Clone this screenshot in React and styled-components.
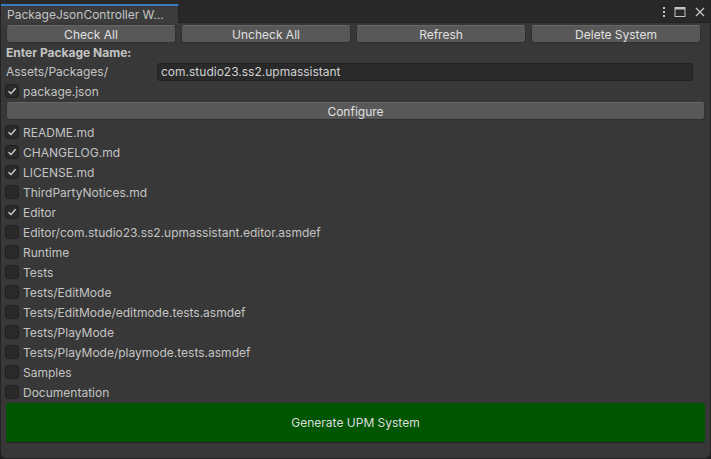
import styled, { createGlobalStyle } from 'styled-components';

const files = [
  { name: 'README.md', checked: true },
  { name: 'CHANGELOG.md', checked: true },
  { name: 'LICENSE.md', checked: true },
  { name: 'ThirdPartyNotices.md', checked: false },
  { name: 'Editor', checked: true },
  { name: 'Editor/com.studio23.ss2.upmassistant.editor.asmdef', checked: false },
  { name: 'Runtime', checked: false },
  { name: 'Tests', checked: false },
  { name: 'Tests/EditMode', checked: false },
  { name: 'Tests/EditMode/editmode.tests.asmdef', checked: false },
  { name: 'Tests/PlayMode', checked: false },
  { name: 'Tests/PlayMode/playmode.tests.asmdef', checked: false },
  { name: 'Samples', checked: false },
  { name: 'Documentation', checked: false }
];

const Check = ({ checked }) => (
  <Box>
    {checked && (
      <svg width="10" height="10" viewBox="0 0 10 10">
        <path d="M1.5 5.2 L4 7.6 L8.6 2.2" fill="none" stroke="#d2d2d2" strokeWidth="1.4" />
      </svg>
    )}
  </Box>
);

const App = () => {
  return (
    <>
      <GlobalStyle />
      <Window>
        <TabBar>
          <Tab>PackageJsonController W...</Tab>
          <Tools>
            <svg width="4" height="12" viewBox="0 0 4 12">
              <rect x="1" y="1" width="2" height="2" fill="#c4c4c4" />
              <rect x="1" y="5" width="2" height="2" fill="#c4c4c4" />
              <rect x="1" y="9" width="2" height="2" fill="#c4c4c4" />
            </svg>
            <svg width="12" height="12" viewBox="0 0 12 12">
              <rect x="1" y="1.5" width="10" height="9" fill="none" stroke="#c4c4c4" strokeWidth="1" />
              <rect x="1" y="1.5" width="10" height="2" fill="#c4c4c4" />
            </svg>
            <svg width="12" height="12" viewBox="0 0 12 12">
              <path d="M2 2 L10 10 M10 2 L2 10" stroke="#c4c4c4" strokeWidth="1.3" />
            </svg>
          </Tools>
        </TabBar>
        <Body>
          <ButtonRow>
            <Button>Check All</Button>
            <Button>Uncheck All</Button>
            <Button>Refresh</Button>
            <Button>Delete System</Button>
          </ButtonRow>
          <Heading>Enter Package Name:</Heading>
          <FieldRow>
            <FieldLabel>Assets/Packages/</FieldLabel>
            <TextField>com.studio23.ss2.upmassistant</TextField>
          </FieldRow>
          <CheckRow>
            <Check checked />
            <span>package.json</span>
          </CheckRow>
          <WideButton>Configure</WideButton>
          <List>
            {files.map((f) => (
              <CheckRow key={f.name}>
                <Check checked={f.checked} />
                <span>{f.name}</span>
              </CheckRow>
            ))}
          </List>
          <GenerateButton>Generate UPM System</GenerateButton>
        </Body>
      </Window>
    </>
  );
};

const GlobalStyle = createGlobalStyle`
  body {
    margin: 0;
    background: #1e1e1e;
    font-family: Inter, "Noto Sans", sans-serif;
  }
`;

const Window = styled.div`
  width: 711px;
  height: 459px;
  box-sizing: border-box;
  display: flex;
  flex-direction: column;
  background: #383838;
  border: 1px solid #232323;
  border-top: none;
  border-radius: 0 0 6px 6px;
  overflow: hidden;
  color: #c4c4c4;
  font-size: 12px;
`;

const TabBar = styled.div`
  height: 22px;
  flex-shrink: 0;
  display: flex;
  align-items: flex-end;
  justify-content: space-between;
  background: #282828;
  border-bottom: 1px solid #232323;
`;

const Tab = styled.div`
  width: 178px;
  height: 19px;
  box-sizing: border-box;
  padding-left: 6px;
  display: flex;
  align-items: center;
  background: #3c3c3c;
  border-top: 2px solid #3a79bb;
  border-right: 1px solid #232323;
  margin-bottom: -1px;
`;

const Tools = styled.div`
  align-self: center;
  display: flex;
  align-items: center;
  gap: 8px;
  padding-right: 4px;
  padding-top: 2px;
`;

const Body = styled.div`
  display: flex;
  flex-direction: column;
  padding: 2px 5px 0 4px;
`;

const ButtonRow = styled.div`
  display: grid;
  grid-template-columns: repeat(4, 1fr);
  gap: 5px;
  margin-left: 1px;
  margin-right: 4px;
`;

const Button = styled.div`
  height: 18px;
  box-sizing: border-box;
  display: flex;
  align-items: center;
  justify-content: center;
  background: #585858;
  border: 1px solid #303030;
  border-top-color: #656565;
  border-radius: 3px;
  color: #e0e0e0;
`;

const Heading = styled.div`
  height: 19px;
  display: flex;
  align-items: center;
  padding-left: 1px;
  font-weight: 700;
`;

const FieldRow = styled.div`
  display: flex;
  align-items: center;
  height: 19px;
`;

const FieldLabel = styled.div`
  width: 151px;
  padding-left: 1px;
`;

const TextField = styled.div`
  width: 536px;
  height: 18px;
  box-sizing: border-box;
  display: flex;
  align-items: center;
  padding-left: 3px;
  background: #2a2a2a;
  border: 1px solid #212121;
  border-radius: 3px;
  color: #d2d2d2;
`;

const CheckRow = styled.div`
  height: 20px;
  display: flex;
  align-items: center;
  gap: 4px;
`;

const Box = styled.div`
  width: 14px;
  height: 14px;
  box-sizing: border-box;
  display: flex;
  align-items: center;
  justify-content: center;
  background: #2a2a2a;
  border: 1px solid #202020;
  border-radius: 3px;
`;

const WideButton = styled(Button)`
  margin: 1px 0 2px 1px;
`;

const List = styled.div`
  display: flex;
  flex-direction: column;
`;

const GenerateButton = styled.div`
  height: 39px;
  margin: 1px 0 0 1px;
  display: flex;
  align-items: center;
  justify-content: center;
  background: #005500;
  border-bottom: 1px solid #232323;
  border-radius: 2px;
  color: #dcdcdc;
`;

export default App;
